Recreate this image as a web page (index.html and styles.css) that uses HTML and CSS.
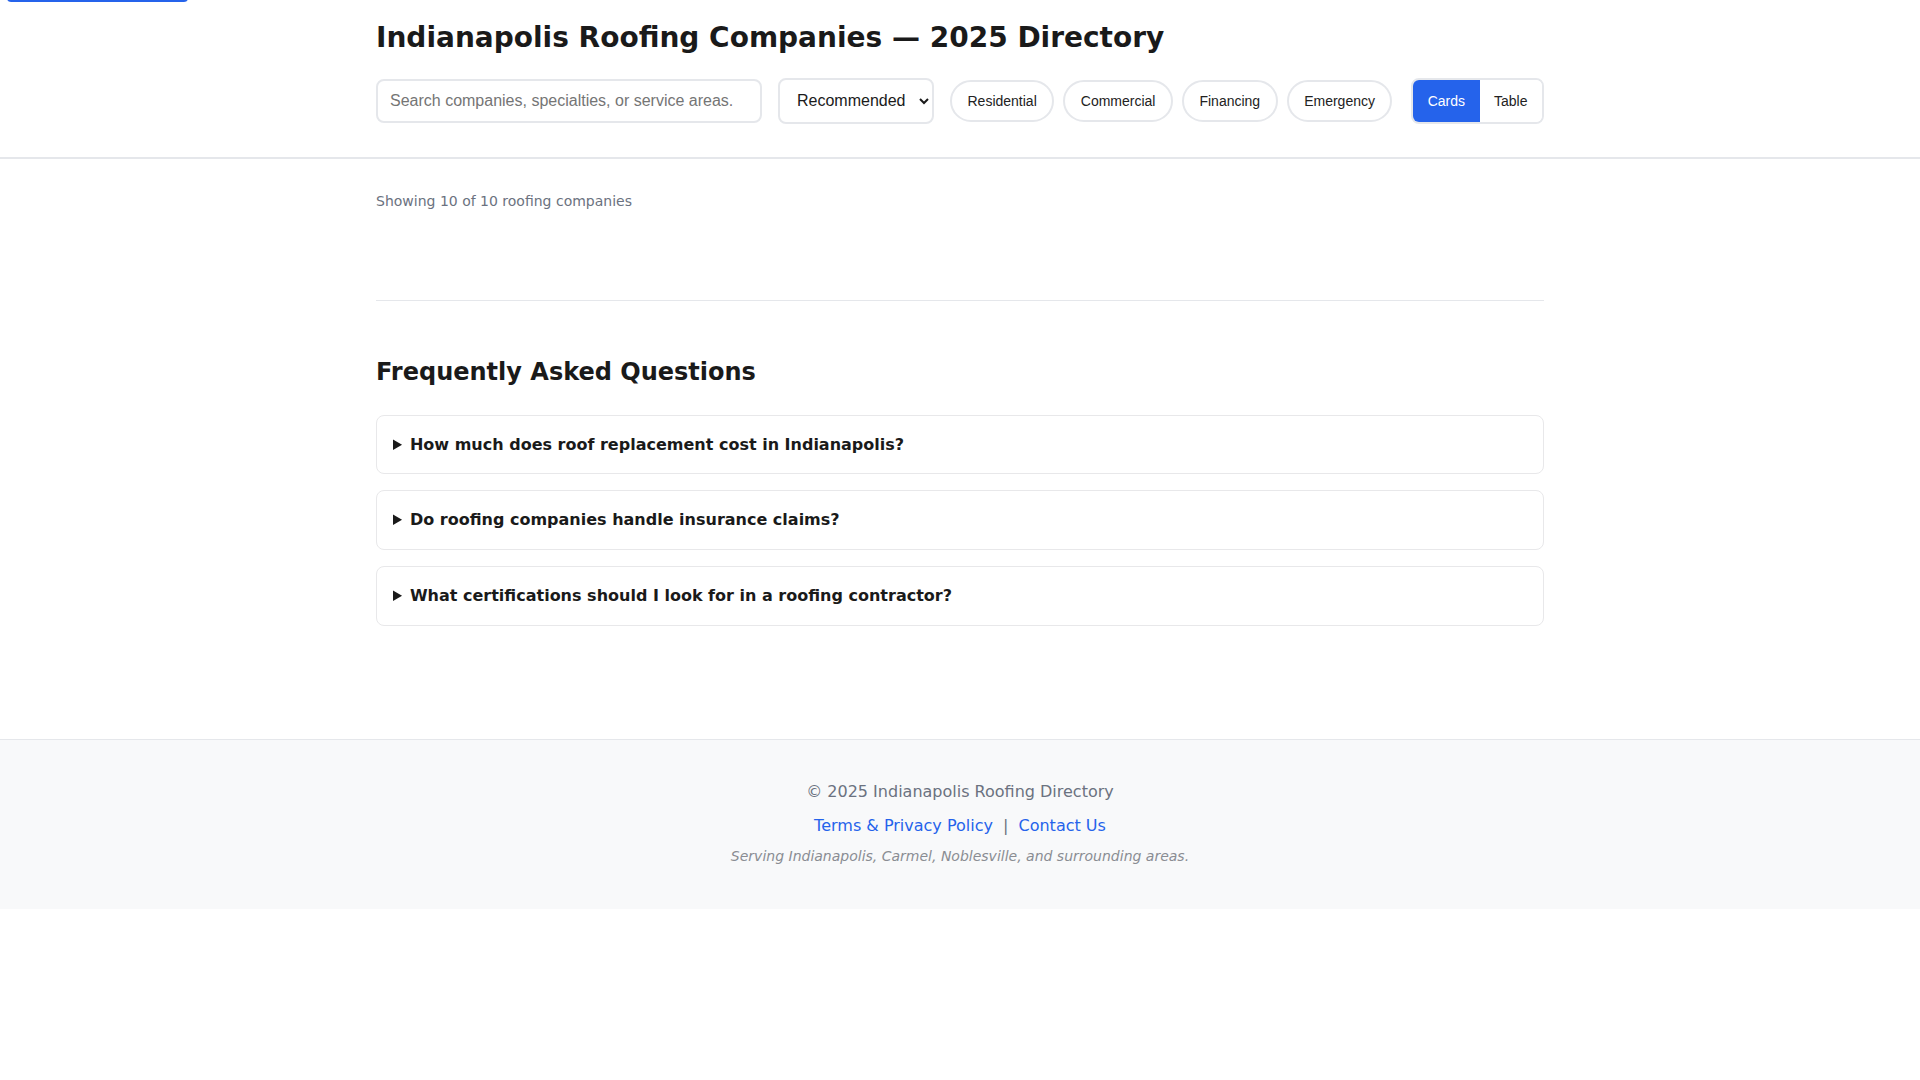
FILE: index.html
```html
<!DOCTYPE html>
<html lang="en">
<head>
<meta charset="utf-8">
<meta name="viewport" content="width=device-width, initial-scale=1">
<title>Indianapolis Roofing Companies — 2025 Directory</title>
<link rel="stylesheet" href="styles.css">
</head>
<body>
<a class="skip-link" href="#main" aria-label="Skip to content"></a>
<header class="site-header">
  <div class="container">
    <h1 class="page-title">Indianapolis Roofing Companies — 2025 Directory</h1>
    <div class="controls">
      <input class="search" type="text" placeholder="Search companies, specialties, or service areas." aria-label="Search">
      <select class="sort" aria-label="Sort">
        <option>Recommended</option>
        <option>Highest rated</option>
        <option>Most reviews</option>
        <option>Name (A–Z)</option>
      </select>
      <div class="chips">
        <button class="chip" type="button">Residential</button>
        <button class="chip" type="button">Commercial</button>
        <button class="chip" type="button">Financing</button>
        <button class="chip" type="button">Emergency</button>
      </div>
      <div class="view-toggle">
        <button class="view-btn is-active" type="button">Cards</button>
        <button class="view-btn" type="button">Table</button>
      </div>
    </div>
  </div>
</header>

<main id="main" class="container main">
  <p class="results-count">Showing 10 of 10 roofing companies</p>
  <div class="company-grid"></div>

  <section class="faq">
    <h2 class="faq-title">Frequently Asked Questions</h2>
    <details class="faq-item">
      <summary>How much does roof replacement cost in Indianapolis?</summary>
      <p>Most asphalt shingle replacements in the Indianapolis area range from about $8,000 to $18,000 depending on roof size, pitch and materials.</p>
    </details>
    <details class="faq-item">
      <summary>Do roofing companies handle insurance claims?</summary>
      <p>Many local contractors will inspect storm damage, document it and meet with your adjuster to help with the claim.</p>
    </details>
    <details class="faq-item">
      <summary>What certifications should I look for in a roofing contractor?</summary>
      <p>Look for manufacturer certifications such as GAF Master Elite or Owens Corning Platinum Preferred, plus proof of licensing and insurance.</p>
    </details>
  </section>
</main>

<footer class="site-footer">
  <p class="copyright">© 2025 Indianapolis Roofing Directory</p>
  <p class="footer-links"><a href="#">Terms &amp; Privacy Policy</a> <span class="sep">|</span> <a href="#">Contact Us</a></p>
  <p class="service-area">Serving Indianapolis, Carmel, Noblesville, and surrounding areas.</p>
</footer>
</body>
</html>
```

FILE: styles.css
```css
* {
  box-sizing: border-box;
}

html,
body {
  margin: 0;
  padding: 0;
  background: #ffffff;
}

body {
  font-family: "DejaVu Sans", "Noto Sans", sans-serif;
  color: #1a1a1a;
  line-height: 1.6;
  position: relative;
}

.skip-link {
  position: absolute;
  left: 7px;
  top: -38px;
  width: 181px;
  height: 40px;
  background: #2563eb;
  border-radius: 4px;
}

.container {
  max-width: 1200px;
  margin: 0 auto;
  padding: 0 16px;
}

/* Header */
.site-header {
  background: #ffffff;
  padding: 21px 0 33px;
  border-bottom: 2px solid #e5e7eb;
}

.page-title {
  margin: 0 0 23px;
  font-size: 28px;
  line-height: 1.2;
  font-weight: 700;
  color: #1a1a1a;
}

.controls {
  display: flex;
  align-items: center;
  gap: 16px;
}

.search,
.sort,
.chip,
.view-btn {
  font-family: "Liberation Sans", Arial, sans-serif;
}

.search {
  flex-shrink: 0;
  width: 386px;
  height: 44px;
  padding: 0 12px;
  font-size: 16px;
  color: #1a1a1a;
  background: #ffffff;
  border: 2px solid #e5e7eb;
  border-radius: 8px;
  outline: none;
}

.search::placeholder {
  color: #757575;
}

.sort {
  flex-shrink: 0;
  height: 46px;
  width: 156px;
  padding: 0 10px 0 13px;
  font-size: 16px;
  color: #1a1a1a;
  background: #ffffff;
  border: 2px solid #e5e7eb;
  border-radius: 8px;
}

.chips {
  display: flex;
  gap: 9px;
}

.chip {
  padding: 11px 15.5px;
  font-size: 14px;
  line-height: normal;
  color: #222222;
  background: #ffffff;
  border: 2px solid #e5e7eb;
  border-radius: 999px;
  cursor: pointer;
}

.view-toggle {
  display: flex;
  flex-shrink: 0;
  margin-left: auto;
  border: 2px solid #e5e7eb;
  border-radius: 8px;
  overflow: hidden;
}

.view-btn {
  padding: 13px 14.5px;
  font-size: 14px;
  line-height: normal;
  color: #222222;
  background: #ffffff;
  border: 0;
  cursor: pointer;
}

.view-btn.is-active {
  background: #2563eb;
  color: #ffffff;
}

/* Main */
.main {
  padding-top: 31px;
  padding-bottom: 97px;
}

.results-count {
  margin: 0;
  font-size: 14px;
  color: #6b7280;
}

.faq {
  margin-top: 88px;
  padding-top: 57px;
  border-top: 1px solid #e5e7eb;
}

.faq-title {
  margin: 0 0 28px;
  font-size: 24px;
  line-height: 1.2;
  font-weight: 700;
  color: #1a1a1a;
}

.faq-item {
  margin-bottom: 16px;
  padding: 16px;
  border: 1px solid #e8e8ea;
  border-radius: 8px;
  background: #ffffff;
}

.faq-item summary {
  font-size: 16px;
  font-weight: 700;
  cursor: pointer;
}

.faq-item p {
  margin: 12px 0 0;
  color: #4b5563;
}

/* Footer */
.site-footer {
  padding: 39px 16px 42px;
  background: #f8f9fa;
  border-top: 1px solid #e5e7eb;
  text-align: center;
}

.site-footer p {
  margin: 0;
}

.copyright {
  font-size: 16px;
  color: #6b7280;
  margin-bottom: 9px !important;
}

.footer-links {
  font-size: 16px;
  color: #6b7280;
  margin-bottom: 6px !important;
}

.footer-links a {
  color: #2563eb;
  text-decoration: none;
}

.footer-links .sep {
  margin: 0 5px;
}

.service-area {
  font-size: 14px;
  font-style: italic;
  color: #8a8d93;
}
```
